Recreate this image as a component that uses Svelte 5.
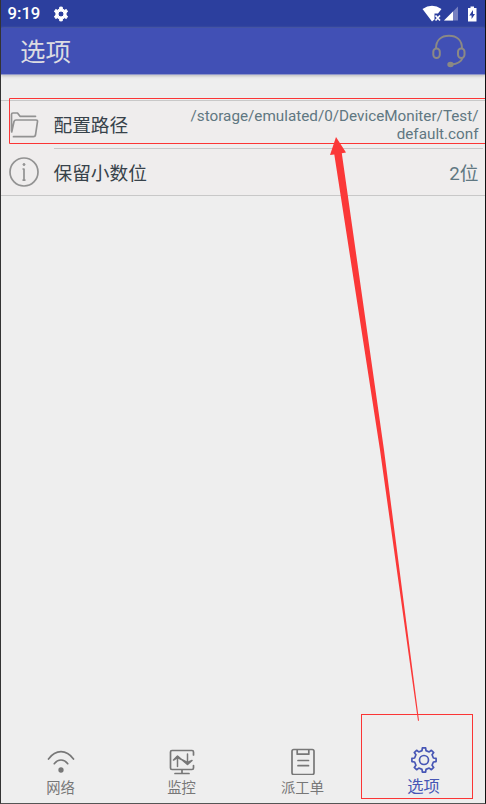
<script>
  function gear(cx, cy, outer, inner, teeth) {
    const step = (Math.PI * 2) / teeth;
    const pts = [];
    for (let i = 0; i < teeth; i++) {
      const a = i * step - Math.PI / 2;
      for (const [r, f] of [[inner, -0.27], [outer, -0.17], [outer, 0.17], [inner, 0.27]]) {
        pts.push(`${(cx + r * Math.cos(a + f * step)).toFixed(2)},${(cy + r * Math.sin(a + f * step)).toFixed(2)}`);
      }
    }
    return 'M' + pts.join('L') + 'Z';
  }
  const tabs = [
    { id: 'network', label: '网络' },
    { id: 'monitor', label: '监控' },
    { id: 'orders', label: '派工单' },
    { id: 'options', label: '选项' }
  ];
  const active = 'options';
</script>

<div class="screen">
  <div class="status">
    <span class="time">9:19</span>
    <svg class="cog" width="16" height="16" viewBox="0 0 16 16">
      <path fill-rule="evenodd" fill="#fff" stroke="#fff" stroke-width="1" stroke-linejoin="round" d={gear(8, 8, 7, 5.2, 6) + 'M8 5a3 3 0 1 0 0 6a3 3 0 1 0 0-6Z'} />
    </svg>
    <svg class="signals" width="58" height="20" viewBox="0 0 58 20">
      <path fill="#fff" d="M1.500 3.500Q11 -3 20.500 3.500L17 8H13.500V14L11 16Z" transform="translate(0 1.5)" />
      <path stroke="#fff" stroke-width="1.700" d="M14.500 11.500l4.500 5M19 11.500l-4.500 5" />
      <path fill="#7780c0" d="M37 2.500V16.500H23Z" />
      <path fill="#fff" d="M32 7.500V16.500H23Z" />
      <path fill="#fff" d="M47 4H49.500V2.500h3.500v1.500H55.500V17.500H47Z" />
      <path fill="#2c3f9e" d="M52 6l-3.700 5.500h2.300v3.500L54 10h-2Z" />
    </svg>
  </div>

  <header>
    <h1>选项</h1>
    <svg width="36" height="36" viewBox="0 0 36 36" fill="none" stroke="#8b8985" stroke-width="2">
      <path d="M5 15.500C5 7 10.500 2.800 18 2.800S31 7 31 15.500M31.500 25C30 29.500 26 31 20 31.500" />
      <rect x="2.300" y="15.500" width="6.500" height="9.500" rx="3.200" />
      <rect x="27" y="15.500" width="6.500" height="9.500" rx="3.200" />
      <ellipse cx="19.500" cy="31.500" rx="2.200" ry="1.700" fill="#8b8985" />
    </svg>
  </header>

  <main>
    <section class="list">
      <div class="row">
        <svg class="icon" width="32" height="32" viewBox="0 0 32 32" fill="none" stroke="#929292" stroke-width="1.700" stroke-linejoin="round" stroke-linecap="round">
          <path d="M3.500 22V5.500Q3.500 4 5 4H9.500L12 7.300H27.500M3.700 23L6 12.500Q6.500 11 8 11H28Q29.700 11 29.500 12.500L27.500 26Q27.200 27.700 25.500 27.700H5.500" />
        </svg>
        <div class="content first">
          <span class="name">配置路径</span>
          <span class="path">/storage/emulated/0/DeviceMoniter/Test/<br />default.conf</span>
        </div>
      </div>
      <div class="row">
        <svg class="icon" width="32" height="32" viewBox="0 0 32 32" fill="none" stroke="#929292" stroke-width="1.700">
          <circle cx="16" cy="16" r="14" />
          <path d="M16 12.500V24.500M14.500 13H16M14.500 24.200H17.500" />
          <circle cx="16" cy="8.500" r="1" fill="#929292" stroke-width="1" />
        </svg>
        <div class="content">
          <span class="name">保留小数位</span>
          <span class="value">2位</span>
        </div>
      </div>
    </section>
  </main>

  <nav>
    {#each tabs as tab}
      <div class="tab" class:active={tab.id === active}>
        <svg width="30" height="30" viewBox="0 0 30 30" fill="none" stroke="currentColor" stroke-width="1.700" stroke-linecap="round" stroke-linejoin="round">
          {#if tab.id === 'network'}
            <path d="M2.500 14Q8 6.700 15 6.700T27.500 14M8.300 18.700Q11 15 15 15T21.700 18.700" />
            <circle cx="15" cy="25" r="1.800" fill="currentColor" />
          {:else if tab.id === 'monitor'}
            <path d="M26.500 10V7Q26.500 5.500 25 5.500H5Q3.500 5.500 3.500 7V23Q3.500 24.500 5 24.500H25Q26.500 24.500 26.500 23V20.500M15 24.500V28M8 28.500H22" />
            <path stroke-width="1.500" d="M10.500 21.500V12M20.500 9V19" />
            <path stroke-width="1.500" fill="currentColor" d="M6.500 15L10.500 11L20.500 19.500L25 15.500L20.500 17.500L10.500 12.500Z" />
          {:else if tab.id === 'orders'}
            <rect x="4" y="4.500" width="22" height="25" rx="1.800" />
            <path d="M9.200 5V9.200H20.800V5M10 15.500H20.500M10 20.700H20.500" />
          {:else}
            <path d={gear(15, 15, 12.2, 9.6, 8)} />
            <circle cx="15" cy="15" r="4.500" />
          {/if}
        </svg>
        <span>{tab.label}</span>
      </div>
    {/each}
  </nav>

  <svg class="marks" width="486" height="804" viewBox="0 0 486 804">
    <g fill="none" stroke="#fb3535">
      <path d="M486 98.500H9.500V143.500H486" />
      <rect x="361.500" y="714.500" width="111" height="84" />
    </g>
    <path fill="#fb3838" d="M336 137L346 152.500L341.800 153.200L384 450L419 720.500L418 721L380 450L334.300 154.500L330 155Z" />
  </svg>
</div>

<style>
  :global(body) { margin: 0; }
  .screen {
    position: relative;
    box-sizing: border-box;
    width: 486px;
    height: 804px;
    display: flex;
    flex-direction: column;
    overflow: hidden;
    background: #eee;
    border: solid #333;
    border-width: 0 1px 1px;
    border-right-color: #111;
    border-bottom-color: #555;
    font-family: Roboto, "Noto Sans CJK SC", sans-serif;
  }
  .status {
    height: 28px;
    flex: none;
    display: flex;
    align-items: center;
    background: #2c3f9e;
    color: #fff;
  }
  .time { width: 45px; padding-left: 6.5px; font-size: 16.7px; font-weight: 500; line-height: 28px; }
  .cog { margin-left: 0.5px; }
  .signals { margin-left: auto; margin-right: 6px; }
  header {
    box-sizing: border-box;
    height: 47px;
    display: flex;
    align-items: center;
    justify-content: space-between;
    padding: 0 18px 0 19px;
    background: #4150b5;
    border-bottom: 1px solid #8f96c9;
    box-shadow: 0 1px 3px #bbb;
  }
  h1 { margin: 0; padding-top: 3px; font-size: 25.5px; font-weight: 400; line-height: 43px; color: #dcdce2; }
  main { flex: 1; padding-top: 25px; }
  .list { border: solid #c8c8c8; border-width: 1px 0; background: #efeded; }
  .row { height: 47px; display: flex; align-items: center; padding-left: 7px; }
  .icon { flex: none; }
  .content {
    box-sizing: border-box;
    flex: 1;
    height: 47px;
    display: flex;
    align-items: center;
    justify-content: space-between;
    margin: 0 2px 0 13.5px;
    padding-right: 4.500px;
  }
  .first { height: 48px; border-bottom: 1px solid #c8c8c8; }
  .name { padding-bottom: 1px; font-size: 18.7px; color: #37424a; white-space: nowrap; }
  .path { padding-top: 2px; font-size: 15.25px; line-height: 18px; color: #607781; text-align: right; white-space: nowrap; }
  .value { font-size: 18.7px; color: #607781; }
  nav { box-sizing: border-box; height: 60px; flex: none; display: flex; margin: 0 1px 0 -1px; padding-top: 2px; }
  .tab { flex: 1; display: flex; flex-direction: column; align-items: center; gap: 2px; color: #777; }
  .tab svg { flex: none; }
  .tab span { font-size: 14.3px; line-height: 22px; white-space: nowrap; }
  .tab.active { color: #4756b5; }
  .tab.active span { font-size: 16.3px; line-height: 20px; }
  .marks { position: absolute; left: -1px; top: 0; }
</style>
